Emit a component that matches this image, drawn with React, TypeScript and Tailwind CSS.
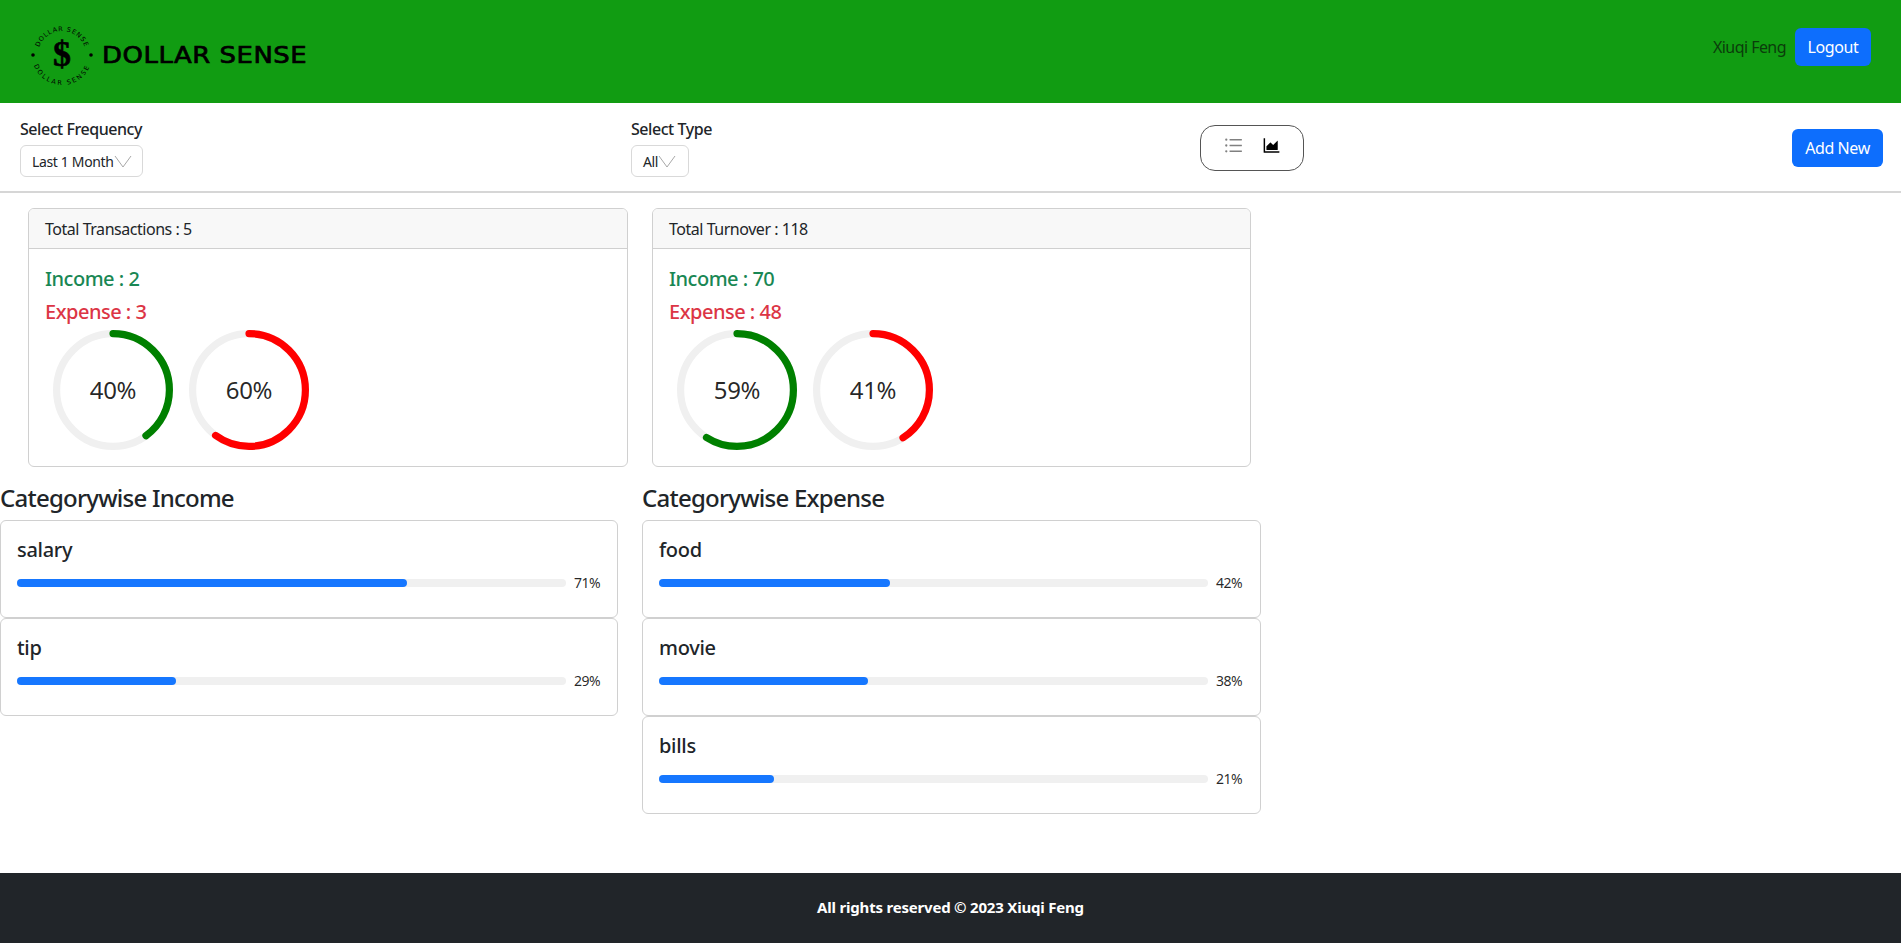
import { AiOutlineAreaChart, AiOutlineUnorderedList } from 'react-icons/ai'

const Ring = ({ percent, color }: { percent: number; color: string }) => {
    const r = 47
    const c = 2 * Math.PI * r
    return (
        <div className="relative w-[120px] h-[120px]">
            <svg viewBox="0 0 100 100" className="w-[120px] h-[120px]">
                <circle cx="50" cy="50" r={r} fill="none" stroke="#f0f0f0" strokeWidth="6" />
                <circle
                    cx="50"
                    cy="50"
                    r={r}
                    fill="none"
                    stroke={color}
                    strokeWidth="6"
                    strokeLinecap="round"
                    strokeDasharray={`${(c * percent) / 100} ${c}`}
                    transform="rotate(-90 50 50)"
                />
            </svg>
            <div className="absolute inset-0 flex items-center justify-center text-[24px] text-[#000000d9] tracking-[-0.3px]">{percent}%</div>
        </div>
    )
}

const Select = ({ label, value, width }: { label: string; value: string; width: string }) => (
    <div>
        <div className="text-[16px] leading-[20px] font-medium text-[#212529] mb-[6px] tracking-[-0.45px]">{label}</div>
        <div className={`flex items-center h-[32px] pl-[11px] pr-[4px] rounded-[6px] border border-[#d9d9d9] text-[14px] text-[#212529] tracking-[-0.35px] ${width}`}>
            <span>{value}</span>
            <svg width="18" height="13" viewBox="0 0 18 13" className="shrink-0">
                <path d="M1 1 L9 12 L17 1" fill="none" stroke="#a8a8a8" strokeWidth="1" />
            </svg>
        </div>
    </div>
)

const Summary = ({ title, income, expense, incomePct, expensePct }: { title: string; income: number; expense: number; incomePct: number; expensePct: number }) => (
    <div className="rounded-[6px] border border-[#d0d0d0] h-[259px] overflow-hidden">
        <div className="h-[40px] bg-[#f8f8f8] border-b border-[#d0d0d0] px-[16px] flex items-center text-[16px] text-[#212529] tracking-[-0.47px]">{title}</div>
        <div className="pt-[15px] px-[16px]">
            <div className="text-[20px] leading-[30px] font-medium text-[#198754] tracking-[-0.5px] mb-[3px]">Income : {income}</div>
            <div className="text-[20px] leading-[30px] font-medium text-[#dc3545] tracking-[-0.5px]">Expense : {expense}</div>
            <div className="flex gap-[16px] ml-[8px] mt-[3px]">
                <Ring percent={incomePct} color="green" />
                <Ring percent={expensePct} color="red" />
            </div>
        </div>
    </div>
)

const Category = ({ name, percent }: { name: string; percent: number }) => (
    <div className="rounded-[6px] border border-[#d0d0d0] h-[98px] px-[16px] pt-[14px]">
        <div className="text-[20px] leading-[30px] font-medium text-[#212529] tracking-[-0.3px]">{name}</div>
        <div className="flex items-center mt-[8px]">
            <div className="w-[549px] h-[8px] rounded-full bg-[#f0f0f0] shrink-0">
                <div className="h-[8px] rounded-full bg-[#1677ff]" style={{ width: `${percent}%` }} />
            </div>
            <span className="ml-[8px] text-[14px] leading-[20px] text-[#000000d9] tracking-[-0.5px]">{percent}%</span>
        </div>
    </div>
)

const App = () => {
    return (
        <div className="min-h-[943px] flex flex-col bg-white font-['Noto_Sans','Open_Sans',sans-serif]">
            <header className="h-[103px] bg-[#119c12] flex items-center justify-between pl-[29px] pr-[30px]">
                <div className="flex items-center gap-[7px] mt-[7px]">
                    <svg width="66" height="66" viewBox="0 0 66 66">
                        <defs>
                            <path id="top-arc" d="M9 33 A24 24 0 0 1 57 33" />
                            <path id="bottom-arc" d="M3 33 A30 30 0 0 0 63 33" />
                        </defs>
                        <text fontSize="6.5" fontWeight="400" letterSpacing="0.8" fill="#000" fontFamily="DejaVu Sans">
                            <textPath href="#top-arc" startOffset="50%" textAnchor="middle">DOLLAR SENSE</textPath>
                        </text>
                        <text fontSize="6.5" fontWeight="400" letterSpacing="1.9" fill="#000" fontFamily="DejaVu Sans">
                            <textPath href="#bottom-arc" startOffset="50%" textAnchor="middle">DOLLAR SENSE</textPath>
                        </text>
                        <circle cx="4" cy="33" r="1.8" fill="#000" />
                        <circle cx="62" cy="33" r="1.8" fill="#000" />
                        <text x="33" y="44" textAnchor="middle" fontSize="36" fontWeight="700" fill="#000" stroke="#000" strokeWidth="0.6" fontFamily="Liberation Serif">$</text>
                    </svg>
                    <span className="font-['DejaVu_Sans',sans-serif] text-[23px] font-normal text-black tracking-[0.5px] [-webkit-text-stroke:0.7px_#000] scale-x-[1.125] origin-left">DOLLAR SENSE</span>
                </div>
                <div className="flex items-center gap-[9px] mb-[9px]">
                    <span className="text-[16px] text-[#0b3d0b] tracking-[-0.55px]">Xiuqi Feng</span>
                    <button className="h-[38px] w-[76px] rounded-[6px] bg-[#0d6efd] text-white text-[16px] tracking-[-0.4px]">Logout</button>
                </div>
            </header>

            <div className="h-[90px] border-b-2 border-[#d6d6d6] flex items-center justify-between pl-[20px] pr-[18px]">
                <div className="w-[611px] pt-[2px]">
                    <Select label="Select Frequency" value="Last 1 Month" width="w-[123px]" />
                </div>
                <div className="w-[569px] pt-[2px]">
                    <Select label="Select Type" value="All" width="w-[58px]" />
                </div>
                <div className="w-[104px] h-[46px] rounded-[15px] border border-[#555] flex items-center justify-center gap-[17px] pb-[5px] mt-[2px]">
                    <AiOutlineUnorderedList size={21} className="text-[#808080]" />
                    <AiOutlineAreaChart size={21} className="text-black" />
                </div>
                <div className="flex-1 flex justify-end mt-[2px]">
                    <button className="h-[38px] w-[91px] rounded-[6px] bg-[#0d6efd] text-white text-[16px] tracking-[-0.4px]">Add New</button>
                </div>
            </div>

            <div className="grid grid-cols-[600px_599px] gap-[24px] pl-[28px] mt-[15px]">
                <Summary title="Total Transactions : 5" income={2} expense={3} incomePct={40} expensePct={60} />
                <Summary title="Total Turnover : 118" income={70} expense={48} incomePct={59} expensePct={41} />
            </div>

            <div className="grid grid-cols-[618px_619px] gap-[24px] mt-[14px]">
                <div>
                    <h2 className="text-[24px] leading-[34px] mb-[5px] font-medium text-[#212529] tracking-[-0.76px]">Categorywise Income</h2>
                    <Category name="salary" percent={71} />
                    <Category name="tip" percent={29} />
                </div>
                <div>
                    <h2 className="text-[24px] leading-[34px] mb-[5px] font-medium text-[#212529] tracking-[-0.76px]">Categorywise Expense</h2>
                    <Category name="food" percent={42} />
                    <Category name="movie" percent={38} />
                    <Category name="bills" percent={21} />
                </div>
            </div>

            <footer className="mt-auto h-[70px] pb-[2px] bg-[#212529] flex items-center justify-center text-white text-[15px] font-bold tracking-[-0.2px]">
                All rights reserved © 2023 Xiuqi Feng
            </footer>
        </div>
    )
}

export default App
